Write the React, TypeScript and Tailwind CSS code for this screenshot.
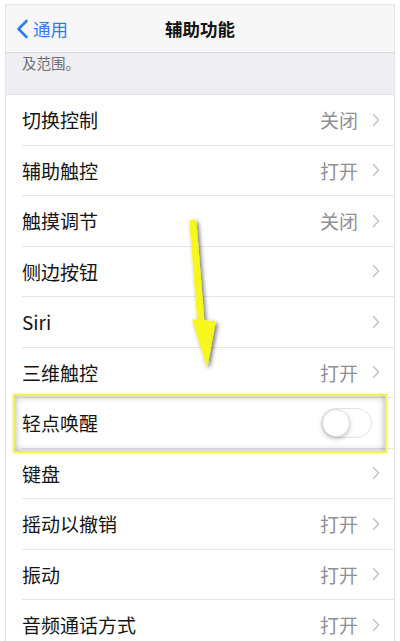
import React from 'react';

type Row = { label: string; value?: string; toggle?: boolean };

const ROWS: Row[] = [
    { label: '切换控制', value: '关闭' },
    { label: '辅助触控', value: '打开' },
    { label: '触摸调节', value: '关闭' },
    { label: '侧边按钮' },
    { label: 'Siri' },
    { label: '三维触控', value: '打开' },
    { label: '轻点唤醒', toggle: true },
    { label: '键盘' },
    { label: '摇动以撤销', value: '打开' },
    { label: '振动', value: '打开' },
    { label: '音频通话方式', value: '打开' },
];

function Chevron() {
    return (
        <svg width="8" height="14" viewBox="0 0 8 14" fill="none" className="ml-[14px] shrink-0">
            <path d="M1.5 1.5 L6.5 7 L1.5 12.5" stroke="#c4c4c9" strokeWidth="1.6" strokeLinecap="round" strokeLinejoin="round" />
        </svg>
    );
}

function Toggle() {
    return (
        <div className="w-[51px] h-[30px] rounded-full border border-[#e3e3e6] bg-white relative shadow-[inset_0_0_1px_rgba(0,0,0,0.1)]">
            <div className="absolute left-0 top-0 w-[28px] h-[28px] rounded-full bg-white border border-[#dcdcdf] shadow-[0_2px_4px_rgba(0,0,0,0.22)]" />
        </div>
    );
}

export default function App() {
    return (
        <div
            className="w-[400px] h-[641px] bg-white px-[5px] pt-[4px] overflow-hidden relative"
            style={{ fontFamily: '"Noto Sans CJK SC", "Noto Sans", sans-serif' }}
        >
            <div className="h-full border-x border-t border-[#e4e4e6] bg-white overflow-hidden">
                {/* NAV BAR */}
                <div className="h-[48px] bg-[#f7f7f8] border-b border-[#d8d8dc] flex items-center relative">
                    <div className="flex items-center pl-[10px] text-[#2f7cf6]">
                        <svg width="13" height="20" viewBox="0 0 13 20" fill="none">
                            <path d="M10.5 2 L2.5 10 L10.5 18" stroke="currentColor" strokeWidth="2.6" strokeLinecap="round" strokeLinejoin="round" />
                        </svg>
                        <span className="text-[17.5px] ml-[4px] leading-none">通用</span>
                    </div>
                    <div className="absolute left-0 right-0 text-center text-[17.5px] font-semibold text-[#111] leading-none pointer-events-none">
                        辅助功能
                    </div>
                </div>

                {/* SECTION FOOTER (scrolled) */}
                <div className="h-[42px] bg-[#efeff3] border-b border-[#e2e2e6] pl-[16px] pt-[1px]">
                    <span className="block text-[14.5px] text-[#6d6d72] leading-[18px]">及范围。</span>
                </div>

                {/* LIST */}
                <div className="bg-white">
                    {ROWS.map((row, i) => (
                        <div key={row.label} className="relative">
                            <div className="h-[49.5px] flex items-center pl-[16px] pr-[14px]">
                                <span className="flex-1 text-[19px] text-[#141414] leading-none">{row.label}</span>
                                {row.toggle ? (
                                    <div className="mr-[8px]">
                                        <Toggle />
                                    </div>
                                ) : (
                                    <>
                                        {row.value && <span className="text-[19px] text-[#8f8f94] leading-none">{row.value}</span>}
                                        <Chevron />
                                    </>
                                )}
                            </div>
                            {i < ROWS.length - 1 && <div className="ml-[16px] h-px bg-[#e6e6e9]" />}
                            {row.toggle && (
                                <div className="absolute left-[7px] w-[374px] top-[-4px] h-[59px] border-[2px] border-[#eef25c] shadow-[inset_0_0_7px_rgba(0,0,0,0.35),0_0_3px_rgba(230,235,80,0.8)] pointer-events-none" />
                            )}
                        </div>
                    ))}
                </div>
            </div>

            {/* ARROW */}
            <svg className="absolute left-[180px] top-[215px] pointer-events-none" width="50" height="160" viewBox="0 0 50 160">
                <defs>
                    <filter id="sh" x="-50%" y="-20%" width="200%" height="140%">
                        <feDropShadow dx="2" dy="2" stdDeviation="2" floodColor="#000" floodOpacity="0.55" />
                    </filter>
                </defs>
                <g filter="url(#sh)">
                    <path d="M13 8 L21 108" stroke="#f7f71a" strokeWidth="7" strokeLinecap="round" />
                    <path d="M13 105 L35 107 L27 150 Z" fill="#f7f71a" stroke="#f7f71a" strokeWidth="1.5" strokeLinejoin="round" />
                </g>
            </svg>
        </div>
    );
}
